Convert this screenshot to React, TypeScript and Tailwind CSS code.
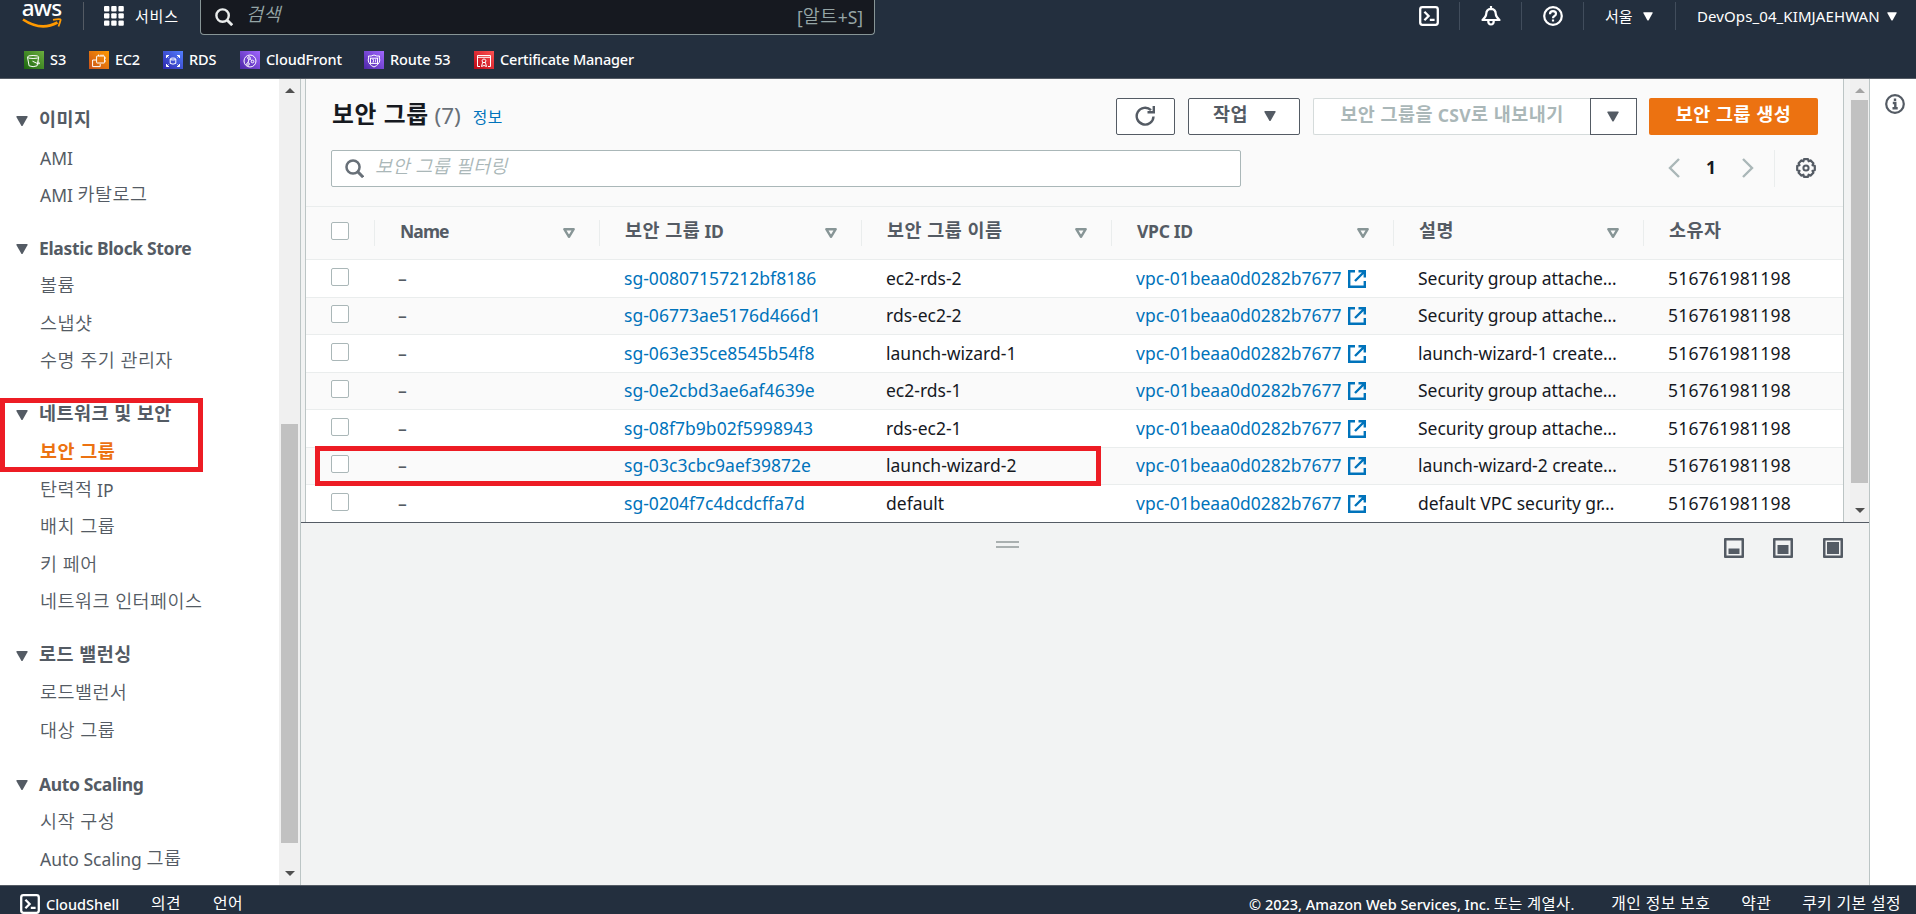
import { ReactNode } from "react";
import clsx from "clsx";

const navGroups = [
  {
    title: "이미지",
    items: ["AMI", "AMI 카탈로그"],
  },
  {
    title: "Elastic Block Store",
    items: ["볼륨", "스냅샷", "수명 주기 관리자"],
  },
  {
    title: "네트워크 및 보안",
    items: ["보안 그룹", "탄력적 IP", "배치 그룹", "키 페어", "네트워크 인터페이스"],
  },
  {
    title: "로드 밸런싱",
    items: ["로드밸런서", "대상 그룹"],
  },
  {
    title: "Auto Scaling",
    items: ["시작 구성", "Auto Scaling 그룹"],
  },
];

const rows = [
  { id: "sg-00807157212bf8186", name: "ec2-rds-2", desc: "Security group attache…" },
  { id: "sg-06773ae5176d466d1", name: "rds-ec2-2", desc: "Security group attache…" },
  { id: "sg-063e35ce8545b54f8", name: "launch-wizard-1", desc: "launch-wizard-1 create…" },
  { id: "sg-0e2cbd3ae6af4639e", name: "ec2-rds-1", desc: "Security group attache…" },
  { id: "sg-08f7b9b02f5998943", name: "rds-ec2-1", desc: "Security group attache…" },
  { id: "sg-03c3cbc9aef39872e", name: "launch-wizard-2", desc: "launch-wizard-2 create…" },
  { id: "sg-0204f7c4dcdcffa7d", name: "default", desc: "default VPC security gr…" },
];

const columns = ["Name", "보안 그룹 ID", "보안 그룹 이름", "VPC ID", "설명", "소유자"];

const gridCols = "grid grid-cols-[68px_225px_262px_250px_282px_250px_1fr]";

// Hangul is set a little larger and wider than the latin text around it
function Txt({ children, light }: { children: string; light?: boolean }) {
  return (
    <span>
      {children.split(/([가-힣]+(?: [가-힣]+)*)/).map((part, i) =>
        i % 2 === 1 ? (
          <span key={i} className={clsx("align-[1px] text-[1.057em] leading-none tracking-[0.025em]", light && "font-[350]")}>
            {part}
          </span>
        ) : (
          part
        )
      )}
    </span>
  );
}

function Caret({ className }: { className?: string }) {
  return (
    <svg viewBox="0 0 12 10" className={clsx("shrink-0", className)} fill="currentColor">
      <path d="M1 0h10q1 0 .6.9L6.8 9.4q-.8 1-1.6 0L.4.9Q0 0 1 0z" />
    </svg>
  );
}

function SearchIcon({ className }: { className?: string }) {
  return (
    <svg viewBox="0 0 18 18" className={className} fill="none" stroke="currentColor" strokeWidth="2.4">
      <circle cx="7.6" cy="7.6" r="6.2" />
      <path d="M12 12l5.2 5.2" strokeWidth="2.8" />
    </svg>
  );
}

function ShellIcon({ className }: { className?: string }) {
  return (
    <svg viewBox="0 0 20 20" className={className} fill="none" stroke="currentColor" strokeWidth="2.3">
      <rect x="1.2" y="1.2" width="17.6" height="17.6" rx="2.2" />
      <path d="M5.4 5.8l4.2 4.2-4.2 4.2M10.8 13.9h4.8" />
    </svg>
  );
}

function ScrollArrow({ up, className }: { up?: boolean; className?: string }) {
  return (
    <svg viewBox="0 0 10 5" className={clsx("h-[5px] w-[10px]", className)} fill="currentColor">
      <path d={up ? "M0 5L5 0l5 5z" : "M0 0l5 5 5-5z"} />
    </svg>
  );
}

const Svc = ({ from, to, children }: { from: string; to: string; children: ReactNode }) => (
  <svg viewBox="0 0 20 18" preserveAspectRatio="none" className="h-[18px] w-5 shrink-0" fill="none" stroke="#fff" strokeWidth="1">
    <defs>
      <linearGradient id={from.slice(1)} x1="0" y1="1" x2="1" y2="0">
        <stop offset="0" stopColor={from} />
        <stop offset="1" stopColor={to} />
      </linearGradient>
    </defs>
    <rect width="20" height="18" fill={`url(#${from.slice(1)})`} stroke="none" />
    <g transform="translate(0 1)">{children}</g>
  </svg>
);

function Favorites() {
  return (
    <div className="flex h-[37px] items-center pl-6 text-[14.5px] font-medium whitespace-nowrap text-white">
      <div className="flex w-[65px] items-center gap-1.5">
        <Svc from="#1b660f" to="#6cae3e">
          <path d="M3.5 5.2l1.6 8.6q4 1.8 8 0l1.6-8.6" />
          <ellipse cx="9.1" cy="5" rx="5.6" ry="1.5" />
          <path d="M8.5 9.2l5.5 2.6q2.2.4 1.2-1.2l-1.4-1" />
        </Svc>
        <span>S3</span>
      </div>
      <div className="flex w-[74px] items-center gap-1.5">
        <Svc from="#c8511b" to="#f90">
          <rect x="7.6" y="4" width="8" height="7" rx=".5" />
          <path d="M7 8H3.6v6.6h7.6V12M9.5 2.6V4M12 2.6V4M14 2.6V4M15.6 6h1.4M15.6 9h1.4" />
        </Svc>
        <span className="tracking-[-0.3px]">EC2</span>
      </div>
      <div className="flex w-[77px] items-center gap-1.5">
        <Svc from="#2e27ad" to="#527fff">
          <ellipse cx="10" cy="7" rx="2.8" ry="1" />
          <path d="M7.2 7v4.4q2.8 1.5 5.6 0V7M3.5 6V3.5H6M14 3.5h2.5V6M3.5 12v2.5H6M14 14.5h2.5V12" />
          <path d="M3.5 3.5l2 2M16.5 3.5l-2 2M3.5 14.5l2-2M16.5 14.5l-2-2" />
        </Svc>
        <span className="tracking-[-0.1px]">RDS</span>
      </div>
      <div className="flex w-[124px] items-center gap-1.5">
        <Svc from="#4d27a8" to="#a166ff">
          <circle cx="10" cy="9" r="6" />
          <circle cx="9" cy="6" r="1.3" />
          <circle cx="12.5" cy="9.5" r="1.3" />
          <circle cx="8" cy="12" r="1.3" />
          <path d="M9 7.3L8 10.7M10 6.8l1.8 1.7" />
        </Svc>
        <span className="tracking-[-0.1px]">CloudFront</span>
      </div>
      <div className="flex w-[110px] items-center gap-1.5">
        <Svc from="#4d27a9" to="#a167ff">
          <path d="M4.5 4q2.5.6 5.5-1 3 1.6 5.5 1-.6 2 .3 4-.3 4.6-5.8 7Q4.5 12.6 4.2 8q.9-2 .3-4z" />
          <rect x="6.5" y="6.2" width="7" height="5.2" />
          <path d="M8.3 7.5h1.2v2.6H8.3M11.5 7.3v3" strokeWidth=".8" />
        </Svc>
        <span className="tracking-[-0.1px]">Route 53</span>
      </div>
      <div className="flex items-center gap-1.5">
        <Svc from="#bd0816" to="#ff5252">
          <path d="M6 14.5H3.5V3.5h13v11H14M3.5 5.3h13" />
          <path d="M10 6.8l2 1.5-.6 2.2H8.6L8 8.3zM8.6 10.5L7.5 14.5l2.5-1 2.5 1-1.1-4" />
        </Svc>
        <span className="tracking-[-0.2px]">Certificate Manager</span>
      </div>
    </div>
  );
}

function Header() {
  return (
    <header className="flex h-[79px] shrink-0 flex-col border-b border-[#545b64] bg-[#232f3e]">
      <div className="flex h-[42px] items-start">
        <div className="flex h-8 w-[83px] shrink-0 flex-col items-center">
          <span className="h-[18px] text-[22.5px] leading-4 font-medium tracking-[-0.8px] text-white">aws</span>
          <svg viewBox="0 0 40 12" className="h-3 w-10" fill="none" stroke="#f90">
            <path d="M1 1.5Q19 13.5 35.5 4.5" strokeWidth="2.6" />
            <path d="M31 1.8q8-1.6 7.6.2T36.5 8.5" strokeWidth="1.8" />
          </svg>
        </div>
        <div className="mt-0.5 h-7 w-px bg-[#545b64]" />
        <div className="ml-5 flex h-8 w-[96px] items-center gap-[11px] text-[15px] text-white">
          <svg viewBox="0 0 20 20" className="h-5 w-5 shrink-0" fill="currentColor">
            {[0, 7.2, 14.4].map((y) =>
              [0, 7.2, 14.4].map((x) => <rect key={`${x}-${y}`} x={x} y={y} width="5.4" height="5.4" rx="1" />)
            )}
          </svg>
          <span className="tracking-[0.8px] whitespace-nowrap">서비스</span>
        </div>
        <div className="flex h-[35px] w-[675px] items-center rounded-b-sm border border-t-0 border-[#879596] bg-[#161920] pr-[11px] text-[#95a5a6]">
          <SearchIcon className="ml-3.5 h-[18px] w-[18px] text-[#eaeded]" />
          <span className="mb-[4px] ml-[13px] grow text-[17.5px] italic">
            <Txt light>검색</Txt>
          </span>
          <span className="text-[17.5px]">
            <Txt light>[알트+S]</Txt>
          </span>
        </div>
        <div className="ml-auto flex h-8 items-center text-[15px] text-white">
          <ShellIcon className="mr-5 h-5 w-5" />
          <div className="h-7 w-px bg-[#414d5c]" />
          <svg viewBox="0 0 20 20" className="mr-5 ml-[21px] h-5 w-5" fill="none" stroke="currentColor" strokeWidth="2.2" strokeLinejoin="round">
            <path d="M10 0v3M10 2.8q4.6.2 4.8 5.2 0 2.8 3.7 6H1.5q3.7-3.2 3.7-6Q5.4 3 10 2.8z" />
            <path d="M7.2 14.5q0 4 2.8 4t2.8-4" />
          </svg>
          <div className="h-7 w-px bg-[#414d5c]" />
          <svg viewBox="0 0 20 20" className="mr-5 ml-[21px] h-5 w-5" fill="none" stroke="currentColor" strokeWidth="2.2">
            <circle cx="10" cy="10" r="8.8" />
            <path d="M7 8.2q0-3 3-3t3 2.6q0 1.4-1.5 2.2T10 12.2M10 13.4v2.2" />
          </svg>
          <div className="h-7 w-px bg-[#414d5c]" />
          <div className="flex w-[91px] items-center justify-between pr-[22px] pl-[21px]">
            <span className="whitespace-nowrap">서울</span>
            <Caret className="h-[9px] w-[10px]" />
          </div>
          <div className="h-7 w-px bg-[#414d5c]" />
          <div className="flex w-[240px] items-center justify-between pr-[19px] pl-[21px]">
            <span className="tracking-[0.1px] whitespace-nowrap">DevOps_04_KIMJAEHWAN</span>
            <Caret className="h-[9px] w-[10px]" />
          </div>
        </div>
      </div>
      <Favorites />
    </header>
  );
}

function Sidebar() {
  return (
    <nav className="relative flex w-[301px] shrink-0 border-r border-[#bcc5c5] bg-white text-[17.5px] text-[#545b64]">
      <div className="w-[279px] overflow-hidden pt-[21.5px]">
        {navGroups.map((group) => (
          <div key={group.title} className="mb-[15px] flex flex-col">
            <div className="flex h-[38.5px] items-center gap-[11px] pl-4 font-bold tracking-[-0.35px]">
              <Caret className="mt-0.5 h-[10px] w-3" />
              <Txt>{group.title}</Txt>
            </div>
            {group.items.map((item) => (
              <div
                key={item}
                className={clsx(
                  "flex h-[37.5px] items-center pl-10 whitespace-nowrap",
                  item === "보안 그룹" && "font-bold text-[#ec7211]"
                )}>
                <Txt light={item !== "보안 그룹"}>{item}</Txt>
              </div>
            ))}
          </div>
        ))}
      </div>
      <div className="flex w-[21px] flex-col items-center bg-[#f0f0f0] pt-[9px] pb-[9px]">
        <ScrollArrow up className="text-[#505050]" />
        <div className="mt-[331px] h-[419px] w-[17px] bg-[#c1c1c1]" />
        <ScrollArrow className="mt-auto text-[#505050]" />
      </div>
      <div className="absolute top-[319px] left-0 h-[74px] w-[203px] border-5 border-[#ed1c24]" />
    </nav>
  );
}

function Toolbar() {
  return (
    <div className="flex h-[127px] flex-col pt-[19px] pr-[25px] pl-[25px]">
      <div className="flex h-[37px] items-center">
        <h1 className="mb-px ml-px text-[22.5px] font-bold whitespace-nowrap text-[#16191f]">
          <Txt>보안 그룹</Txt> <span className="font-normal text-[#687078]">(7)</span>
        </h1>
        <a className="mt-1 ml-3 text-[15px] text-[#0073bb]">
          <Txt>정보</Txt>
        </a>
        <button className="ml-auto flex h-[37px] w-[59px] items-center justify-center rounded-xs border border-[#545b64] bg-white pr-0.5 text-[#545b64]">
          <svg viewBox="0 0 20 20" className="mb-0.5 h-5 w-5" fill="none" stroke="currentColor" strokeWidth="2.4">
            <path d="M18.5 10.5A8.4 8.4 0 1 1 16 4.2" />
            <path d="M18.8 0v6.2H12.5" />
          </svg>
        </button>
        <button className="ml-[13px] flex h-[37px] w-[112px] items-center justify-center gap-4 rounded-xs border border-[#545b64] bg-white pb-0.5 pl-px text-[17.5px] font-bold text-[#545b64]">
          <Txt>작업</Txt>
          <Caret className="h-[10px] w-3" />
        </button>
        <button className="ml-[13px] h-[37px] w-[277px] rounded-l-xs border border-r-0 border-[#d5dbdb] bg-white pb-0.5 text-[17.5px] font-bold tracking-[0.3px] whitespace-nowrap text-[#aab7b8]">
          <Txt>보안 그룹을 CSV로 내보내기</Txt>
        </button>
        <button className="flex h-[37px] w-[47px] items-center justify-center border border-[#545b64] bg-white pr-0.5 text-[#545b64]">
          <Caret className="h-[11px] w-3" />
        </button>
        <button className="ml-3 h-[37px] w-[169px] rounded-xs bg-[#ec7211] pb-0.5 text-[17.5px] font-bold text-white">
          <Txt>보안 그룹 생성</Txt>
        </button>
      </div>
      <div className="mt-[15px] flex h-[37px] items-center">
        <div className="flex h-[37px] w-[910px] items-center rounded-xs border border-[#aab7b8] bg-white pl-[13px]">
          <SearchIcon className="h-[19px] w-[19px] text-[#687078]" />
          <span className="mb-[2px] ml-[11px] text-[17.5px] text-[#aab7b8] italic">
            <Txt light>보안 그룹 필터링</Txt>
          </span>
        </div>
        <div className="ml-auto flex h-full items-center text-[17.5px] font-bold text-[#16191f]">
          <svg viewBox="0 0 12 20" className="mb-0.5 h-5 w-3 text-[#aab7b8]" fill="none" stroke="currentColor" strokeWidth="2.4">
            <path d="M11 1L2 10l9 9" />
          </svg>
          <span className="mb-0.5 w-[62px] text-center">1</span>
          <svg viewBox="0 0 12 20" className="mb-0.5 h-5 w-3 text-[#aab7b8]" fill="none" stroke="currentColor" strokeWidth="2.4">
            <path d="M1 1l9 9-9 9" />
          </svg>
          <div className="mr-[21px] ml-5 h-full w-px bg-[#eaeded]" />
          <svg viewBox="0 0 20 20" className="mr-[2px] mb-0.5 h-5 w-5 text-[#545b64]" fill="none" stroke="currentColor" strokeWidth="2.2" strokeLinejoin="round">
            <path d="M8 1.2h4l.6 2.1 1.9-.9 2.9 2.9-.9 1.9 2.3.7v4.2l-2.3.7.9 1.9-2.9 2.9-1.9-.9-.6 2.2H8l-.6-2.2-1.9.9-2.9-2.9.9-1.9-2.3-.7V7.9l2.3-.7-.9-1.9 2.9-2.9 1.9.9z" />
            <circle cx="10" cy="10" r="2.6" strokeWidth="2" />
          </svg>
        </div>
      </div>
    </div>
  );
}

function Checkbox() {
  return <div className="mb-0.5 h-[18px] w-[18px] rounded-xs border border-[#aab7b8] bg-white" />;
}

function SecurityGroupTable() {
  return (
    <div className="relative text-[17.5px] text-[#16191f]">
      <div className={clsx(gridCols, "h-[53px] items-center border-t border-[#eaeded] font-bold text-[#545b64]")}>
        <div className="pb-0.5 pl-[25px]">
          <Checkbox />
        </div>
        {columns.map((col, i) => (
          <div key={col} className="flex h-[26px] items-center justify-between border-l border-[#eaeded] pr-6 pb-[3px] pl-[25px] whitespace-nowrap">
            <span className={i === 0 ? "tracking-[-0.9px]" : "tracking-[-0.3px]"}>
              <Txt>{col}</Txt>
            </span>
            {i < 5 && (
              <svg viewBox="0 0 12 10" className="mt-0.5 h-[10px] w-3" fill="none" stroke="#879596" strokeWidth="2.4" strokeLinejoin="round">
                <path d="M1.3 1.2h9.4L6 8.8z" />
              </svg>
            )}
          </div>
        ))}
      </div>
      {rows.map((row, i) => (
        <div
          key={row.id}
          className={clsx(gridCols, "h-[37.5px] items-center border-t border-[#eaeded] pb-px whitespace-nowrap", i % 2 === 0 ? "bg-white" : "bg-[#fafafa]")}>
          <div className="pl-[25px]">
            <Checkbox />
          </div>
          <div className="pl-6 font-medium text-[#545b64]">–</div>
          <div className="pl-[25px] tracking-[0.03px] text-[#0073bb]">{row.id}</div>
          <div className="pl-[25px]">{row.name}</div>
          <div className="flex items-center gap-1.5 pl-[25px] text-[#0073bb]">
            vpc-01beaa0d0282b7677
            <svg viewBox="0 0 18 18" className="mt-0.5 h-[18px] w-[18px]" fill="none" stroke="currentColor" strokeWidth="2.4">
              <path d="M7 1.2H1.2v15.6h15.6V11M10.5 1.2h6.3v6.3M16.5 1.5L7 11" />
            </svg>
          </div>
          <div className="pl-[25px] tracking-[-0.05px]">{row.desc}</div>
          <div className="pl-[25px] tracking-[0.25px]">516761981198</div>
        </div>
      ))}
      <div className="absolute top-[240px] left-[9px] h-10 w-[786px] border-5 border-[#ed1c24]" />
    </div>
  );
}

function PanelIcon({ inner }: { inner: string }) {
  return (
    <svg viewBox="0 0 20 20" className="h-5 w-5 text-[#545b64]" fill="currentColor">
      <path fillRule="evenodd" d="M1 0h18q1 0 1 1v18q0 1-1 1H1q-1 0-1-1V1q0-1 1-1zM2.5 2.5v15h15v-15z" />
      <path d={inner} />
    </svg>
  );
}

function SplitPanel() {
  return (
    <section className="flex grow flex-col border-t border-[#545b64] bg-[#f2f3f3]">
      <div className="flex h-[52px] items-start pt-[15px] pr-[26px]">
        <div className="mt-[3px] ml-[695px] h-[7px] w-[23px] border-y-2 border-[#aab0b0]" />
        <div className="ml-auto flex">
          <PanelIcon inner="M4.5 10.5h11v5.5h-11z" />
          <div className="mr-[30px] ml-[29px]">
            <PanelIcon inner="M4.5 7h11v9h-11z" />
          </div>
          <PanelIcon inner="M4 4h12v12H4z" />
        </div>
      </div>
    </section>
  );
}

function Footer() {
  return (
    <footer className="flex h-[29px] shrink-0 items-start overflow-hidden border-t border-[#545b64] bg-[#232f3e] pt-2 pr-[15px] pl-5 text-[15px] leading-[21px] whitespace-nowrap text-white">
      <ShellIcon className="h-5 w-5 shrink-0" />
      <span className="ml-1.5 w-[105px] text-[14.5px] font-medium">CloudShell</span>
      <span className="w-[62px]">
        <Txt>의견</Txt>
      </span>
      <Txt>언어</Txt>
      <span className="ml-auto text-[14.5px] font-medium">
        © 2023, Amazon Web Services, Inc.{" "}
        <span className="font-normal">
          <Txt>또는 계열사.</Txt>
        </span>
      </span>
      <span className="ml-[37px]">
        <Txt>개인 정보 보호</Txt>
      </span>
      <span className="ml-[31px]">
        <Txt>약관</Txt>
      </span>
      <span className="ml-[31px]">
        <Txt>쿠키 기본 설정</Txt>
      </span>
    </footer>
  );
}

export default function App() {
  return (
    <div className="flex h-screen flex-col overflow-hidden bg-white font-['Noto_Sans','Noto_Sans_CJK_KR',sans-serif]">
      <Header />
      <div className="flex min-h-0 grow">
        <Sidebar />
        <main className="flex w-[1569px] shrink-0 flex-col border-r border-[#bcc5c5] bg-[#f2f3f3]">
          <div className="flex h-[443px] shrink-0">
            <div className="ml-1 w-[1539px] overflow-hidden border-x border-[#bcc5c5] bg-[#fafafa]">
              <Toolbar />
              <SecurityGroupTable />
            </div>
            <div className="ml-auto flex w-[19px] flex-col items-center bg-[#f0f0f0] pt-[9px] pb-[9px]">
              <ScrollArrow up className="text-[#a3a3a3]" />
              <div className="mt-[7px] h-[383px] w-[17px] bg-[#c1c1c1]" />
              <ScrollArrow className="mt-auto text-[#505050]" />
            </div>
          </div>
          <SplitPanel />
        </main>
        <aside className="grow pt-[15px] pl-[15px] text-[#545b64]">
          <svg viewBox="0 0 20 20" className="h-5 w-5" fill="none" stroke="currentColor" strokeWidth="2.2">
            <circle cx="10" cy="10" r="8.8" />
            <path d="M10 4.5v2.6M7.8 9h2.5v5M7.5 14.2h5.2" strokeWidth="2.4" />
          </svg>
        </aside>
      </div>
      <Footer />
    </div>
  );
}
